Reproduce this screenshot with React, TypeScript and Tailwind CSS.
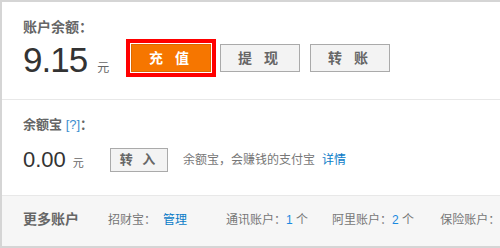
export default function App() {
  return (
    <div className="w-[500px] h-[248px] overflow-hidden bg-white font-['Liberation_Sans','Noto_Sans_CJK_SC',sans-serif]">
      <div className="w-[520px] border-t-2 border-l-2 border-b-2 border-[#d5d5d5]">
        {/* 账户余额 */}
        <section className="h-[98px] border-b border-[#e8e8e8] pl-[21px] pt-[16px]">
          <h3 className="text-[14px] leading-[18px] font-bold text-[#666]">账户余额：</h3>
          <div className="mt-[8px] flex items-center h-[28px]">
            <div className="flex items-baseline w-[108px] pt-[2px]">
              <span className="text-[35px] leading-none tracking-[-1px] text-[#333]">9.15</span>
              <span className="ml-[10px] text-[12px] text-[#666]">元</span>
            </div>
            <button className="w-[80px] h-[28px] bg-[#f67600] border border-[#dd6a00] text-white text-[14px] font-bold tracking-[4px] outline-4 outline-solid outline-[#ff0000] outline-offset-1">
              充 值
            </button>
            <button className="ml-[9px] w-[80px] h-[28px] bg-[#f3f3f3] border border-[#aaaaaa] text-[#666] text-[14px] font-bold tracking-[4px]">
              提 现
            </button>
            <button className="ml-[10px] w-[80px] h-[28px] bg-[#f3f3f3] border border-[#aaaaaa] text-[#666] text-[14px] font-bold tracking-[4px]">
              转 账
            </button>
          </div>
        </section>

        {/* 余额宝 */}
        <section className="h-[96px] border-b border-[#e8e8e8] pl-[21px] pt-[16px]">
          <h3 className="text-[13px] leading-[18px] font-bold text-[#666]">
            余额宝 <span className="font-normal text-[#3d8ecf]">[?]</span>：
          </h3>
          <div className="mt-[14px] flex items-center h-[24px]">
            <div className="flex items-baseline w-[87px]">
              <span className="text-[22px] leading-none text-[#333]">0.00</span>
              <span className="ml-[7px] text-[11px] text-[#666]">元</span>
            </div>
            <button className="w-[58px] h-[24px] bg-[#f3f3f3] border border-[#aaaaaa] text-[#666] text-[13px] font-bold tracking-[3px]">
              转 入
            </button>
            <p className="ml-[15px] text-[12px] text-[#777]">
              余额宝，会赚钱的支付宝
              <a className="ml-[7px] text-[#0a7bc7]">详情</a>
            </p>
          </div>
        </section>

        {/* 更多账户 */}
        <footer className="h-[50px] bg-[#f6f6f6] pl-[21px] flex items-center text-[12px] text-[#777] pb-[3px]">
          <span className="text-[14px] font-bold text-[#666]">更多账户</span>
          <span className="ml-[29px]">招财宝：</span>
          <a className="ml-[7px] text-[#0a7bc7]">管理</a>
          <span className="ml-[39px]">
            通讯账户：<span className="text-[#1a8ae0]">1</span> 个
          </span>
          <span className="ml-[24px]">
            阿里账户：<span className="text-[#1a8ae0]">2</span> 个
          </span>
          <span className="ml-[26px] whitespace-nowrap">保险账户：</span>
        </footer>
      </div>
    </div>
  );
}
